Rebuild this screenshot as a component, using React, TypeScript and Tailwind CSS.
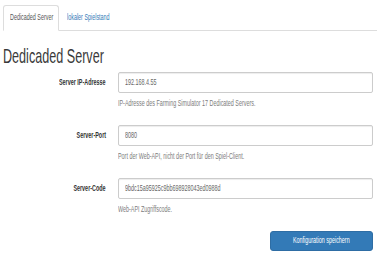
import React from 'react';

// the screenshot's text is narrow, so every label gets squeezed horizontally
const Narrow: React.FC<{ children: React.ReactNode; origin?: 'left' | 'right' | 'center' }> = ({ children, origin = 'left' }) => {
  const originClass = origin === 'right' ? 'origin-right' : origin === 'center' ? 'origin-center' : 'origin-left';
  return <span className={`inline-block whitespace-nowrap scale-x-[0.6] ${originClass}`}>{children}</span>;
};

const fields = [
  { label: 'Server IP-Adresse', value: '192.168.4.55', help: 'IP-Adresse des Farming Simulator 17 Dedicated Servers.' },
  { label: 'Server-Port', value: '8080', help: 'Port der Web-API, nicht der Port für den Spiel-Client.' },
  { label: 'Server-Code', value: '9bdc15a95925c9bb698928043ed0988d', help: 'Web-API Zugriffscode.' },
];

const App: React.FC = () => {
  return (
    <div className="w-[380px] h-[260px] bg-white overflow-hidden font-['Liberation_Sans',Arial,sans-serif] text-[#333]">
      {/* Tabs */}
      <div className="pt-[5px] px-[3px]">
        <ul className="flex border-b border-[#ddd] h-[26px]">
          <li className="w-[56px] shrink-0 h-[26px] -mb-px bg-white border border-b-transparent border-[#ddd] rounded-t-[3px] px-[6px] flex items-center text-[9px] text-[#555] overflow-visible">
            <Narrow>Dedicaded Server</Narrow>
          </li>
          <li className="ml-[2px] w-[56px] shrink-0 h-[26px] px-[6px] flex items-center text-[9px] text-[#337ab7]">
            <Narrow>lokaler Spielstand</Narrow>
          </li>
        </ul>
      </div>

      {/* Heading */}
      <h2 className="mt-[13px] px-[3px] text-[21px] leading-[23px] font-normal text-[#3a3a3a]">
        <Narrow>Dedicaded Server</Narrow>
      </h2>

      {/* Form */}
      <div className="mt-[5px] pr-[7px]">
        {fields.map((field) => (
          <div key={field.label} className="mb-[16px]">
            <div className="flex items-center">
              <div className="w-[106px] shrink-0 flex justify-end text-[9px] font-bold text-[#333]">
                <Narrow origin="right">{field.label}</Narrow>
              </div>
              <div className="ml-[12px] w-[255px] h-[21px] border border-[#ccc] rounded-[2px] shadow-[inset_0_1px_1px_rgba(0,0,0,0.075)] px-[6px] flex items-center text-[9px] text-[#666] overflow-hidden">
                <Narrow>{field.value}</Narrow>
              </div>
            </div>
            <div className="ml-[118px] mt-[4px] leading-[12px] text-[9px] text-[#7c7c7c]">
              <Narrow>{field.help}</Narrow>
            </div>
          </div>
        ))}

        <div className="flex justify-end mt-[2px]">
          <button className="w-[103px] h-[20px] bg-[#337ab7] border border-[#2e6da4] rounded-[3px] text-white text-[9px] flex items-center justify-center">
            <Narrow origin="center">Konfiguration speichern</Narrow>
          </button>
        </div>
      </div>
    </div>
  );
};

export default App;
